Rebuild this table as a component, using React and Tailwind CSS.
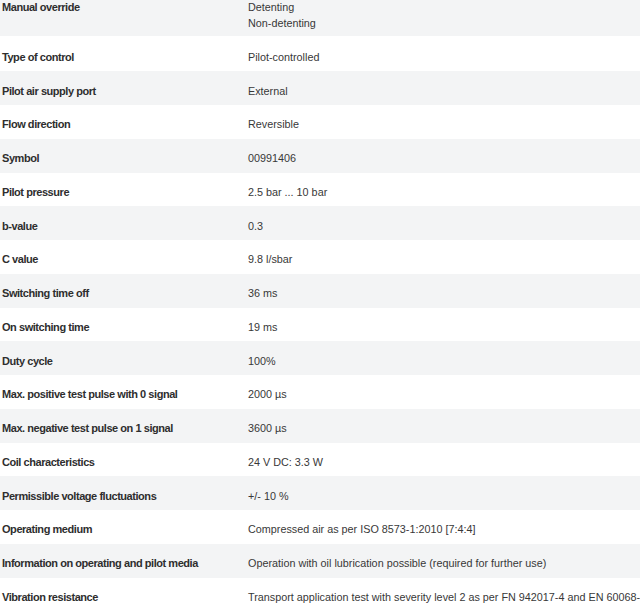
import React from "react";

const rows = [
  ["Manual override", ["Detenting", "Non-detenting"]],
  ["Type of control", ["Pilot-controlled"]],
  ["Pilot air supply port", ["External"]],
  ["Flow direction", ["Reversible"]],
  ["Symbol", ["00991406"]],
  ["Pilot pressure", ["2.5 bar ... 10 bar"]],
  ["b-value", ["0.3"]],
  ["C value", ["9.8 l/sbar"]],
  ["Switching time off", ["36 ms"]],
  ["On switching time", ["19 ms"]],
  ["Duty cycle", ["100%"]],
  ["Max. positive test pulse with 0 signal", ["2000 µs"]],
  ["Max. negative test pulse on 1 signal", ["3600 µs"]],
  ["Coil characteristics", ["24 V DC: 3.3 W"]],
  ["Permissible voltage fluctuations", ["+/- 10 %"]],
  ["Operating medium", ["Compressed air as per ISO 8573-1:2010 [7:4:4]"]],
  ["Information on operating and pilot media", ["Operation with oil lubrication possible (required for further use)"]],
  ["Vibration resistance", ["Transport application test with severity level 2 as per FN 942017-4 and EN 60068-2-6"]],
];

export default function App() {
  return (
    <div
      className="w-[640px] h-[606px] overflow-hidden bg-white text-[11px] text-[#383838]"
      style={{ fontFamily: '"Liberation Sans", Arial, sans-serif' }}
    >
      {rows.map(([label, vals], i) => {
        const grey = i % 2 === 0;
        let rowCls;
        if (i === 0) rowCls = "h-[36px] items-start";
        else if (i === 1) rowCls = "h-[35.3px] items-center pt-[7px]";
        else rowCls = "h-[33.75px] items-center pt-[5px]";
        return (
          <div
            key={label}
            className={`flex whitespace-nowrap leading-[16px] ${grey ? "bg-[#f3f4f5]" : "bg-white"} ${rowCls}`}
          >
            <div className={`w-[248px] shrink-0 pl-[2px] font-bold tracking-[-0.45px] text-[#2e2e2e] ${i === 0 ? "-mt-px" : ""}`}>
              {label}
            </div>
            <div className={`flex flex-col text-[10.8px] ${i === 0 ? "-mt-px" : ""}`}>
              {vals.map((v) => (
                <span key={v}>{v}</span>
              ))}
            </div>
          </div>
        );
      })}
    </div>
  );
}
